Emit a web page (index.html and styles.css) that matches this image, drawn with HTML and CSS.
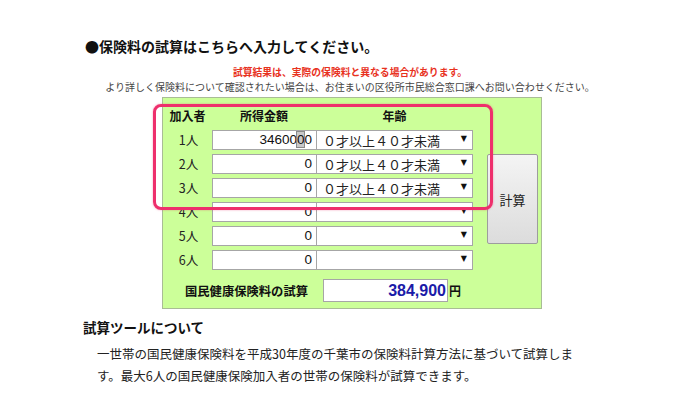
FILE: index.html
```html
<!DOCTYPE html>
<html lang="ja">
<head>
<meta charset="utf-8">
<link rel="stylesheet" href="styles.css">
</head>
<body>
<div class="page">
  <h2 class="title">●保険料の試算はこちらへ入力してください。</h2>
  <p class="warn">試算結果は、実際の保険料と異なる場合があります。</p>
  <p class="note">より詳しく保険料について確認されたい場合は、お住まいの区役所市民総合窓口課へお問い合わせください。</p>

  <div class="calc">
    <div class="grid">
      <div class="hd c1">加入者</div>
      <div class="hd c2">所得金額</div>
      <div class="hd c3">年齢</div>

      <div class="lbl">1人</div>
      <div class="num">34600<span class="caret">0</span>0</div>
      <div class="sel"><span>０才以上４０才未満</span><span class="arrow">▼</span></div>

      <div class="lbl">2人</div>
      <div class="num">0</div>
      <div class="sel"><span>０才以上４０才未満</span><span class="arrow">▼</span></div>

      <div class="lbl">3人</div>
      <div class="num">0</div>
      <div class="sel"><span>０才以上４０才未満</span><span class="arrow">▼</span></div>

      <div class="lbl">4人</div>
      <div class="num">0</div>
      <div class="sel"><span></span><span class="arrow">▼</span></div>

      <div class="lbl">5人</div>
      <div class="num">0</div>
      <div class="sel"><span></span><span class="arrow">▼</span></div>

      <div class="lbl">6人</div>
      <div class="num">0</div>
      <div class="sel"><span></span><span class="arrow">▼</span></div>

      <button class="btn">計算</button>
    </div>

    <div class="result">
      <span class="res-label">国民健康保険料の試算</span>
      <div class="res-box">384,900</div>
      <span class="yen">円</span>
    </div>

    <div class="highlight"></div>
  </div>

  <h2 class="sub">試算ツールについて</h2>
  <p class="desc">一世帯の国民健康保険料を平成30年度の千葉市の保険料計算方法に基づいて試算します。最大6人の国民健康保険加入者の世帯の保険料が試算できます。</p>
</div>
</body>
</html>
```

FILE: styles.css
```css
html, body {
  margin: 0;
  padding: 0;
  background: #ffffff;
}

body {
  font-family: "Noto Sans CJK JP", "Noto Sans", sans-serif;
  color: #1a1a1a;
}

.page {
  width: 540px;
  margin-left: 80px;
  padding-top: 36px;
}

.title {
  margin: 0 0 0 5px;
  font-size: 14px;
  line-height: 20px;
  font-weight: bold;
  color: #111;
}

.warn {
  margin: 9px 0 0 0;
  text-align: center;
  font-size: 9.8px;
  line-height: 14px;
  font-weight: bold;
  color: #e8321e;
}

.note {
  margin: 1px 0 0 0;
  text-align: center;
  font-size: 10px;
  line-height: 14px;
  color: #444;
  white-space: nowrap;
}

.calc {
  position: relative;
  margin: 3px 0 0 82px;
  width: 380px;
  box-sizing: border-box;
  background: #ccff99;
  border: 1px solid #a9bc96;
  padding: 8px 3px 6px 0;
}

.grid {
  display: grid;
  grid-template-columns: 49px 104px 157px 14px 51px;
  grid-template-rows: 20px repeat(6, 20px);
  row-gap: 4px;
}

.c1 { grid-column: 1; }
.c2 { grid-column: 2; }
.c3 { grid-column: 3; }

.hd {
  font-size: 12px;
  font-weight: bold;
  line-height: 20px;
  text-align: center;
  color: #111;
}

.lbl {
  grid-column: 1;
  font-size: 12.5px;
  line-height: 20px;
  text-align: center;
  color: #222;
  padding-left: 2px;
}

.num {
  grid-column: 2;
  width: 105px;
  height: 20px;
  box-sizing: border-box;
  background: #fff;
  border: 1px solid #a6a6a6;
  font-family: "Liberation Sans", Arial, sans-serif;
  font-size: 13.5px;
  line-height: 18px;
  text-align: right;
  padding-right: 4px;
  color: #111;
}

.caret {
  background: #c8c8c8;
  outline: 1px solid #8a8a8a;
}

.sel {
  grid-column: 3;
  height: 20px;
  box-sizing: border-box;
  background: #fff;
  border: 1px solid #a6a6a6;
  display: flex;
  align-items: center;
  justify-content: space-between;
  padding: 0 5px 0 6px;
  font-size: 13px;
  color: #222;
  position: relative;
}

.arrow {
  font-family: "DejaVu Sans", sans-serif;
  font-size: 8px;
  color: #111;
  margin-top: -3px;
}

.btn {
  grid-column: 5;
  grid-row: 3 / span 4;
  margin-bottom: 2px;
  background: linear-gradient(#f4f4f4, #dcdcdc);
  border: 1px solid #9d9d9d;
  border-radius: 2px;
  font-family: "Noto Sans CJK JP", sans-serif;
  font-size: 13px;
  color: #222;
  padding: 0;
}

.result {
  display: flex;
  align-items: center;
  margin-top: 9px;
  padding-left: 22px;
}

.res-label {
  font-size: 12.3px;
  font-weight: bold;
  color: #111;
  width: 138px;
}

.res-box {
  width: 125px;
  height: 23px;
  box-sizing: border-box;
  background: #fff;
  border: 1px solid #a6a6a6;
  text-align: right;
  padding-right: 1px;
  font-family: "Liberation Sans", Arial, sans-serif;
  font-size: 16px;
  font-weight: bold;
  line-height: 21px;
  color: #1b1ba8;
}

.yen {
  font-size: 12px;
  font-weight: bold;
  color: #111;
  margin-left: 1px;
}

.highlight {
  position: absolute;
  left: -10px;
  top: 6px;
  width: 340px;
  height: 106px;
  box-sizing: border-box;
  border: 3px solid #ee2f6c;
  border-radius: 8px;
  box-shadow: 0 0 2px rgba(238, 47, 108, 0.5);
  pointer-events: none;
}

.sub {
  margin: 8px 0 0 3px;
  font-size: 13.5px;
  line-height: 20px;
  font-weight: bold;
  color: #111;
}

.desc {
  margin: 6px 0 0 17px;
  width: 482px;
  font-size: 12.5px;
  line-height: 22px;
  color: #222;
}
```
